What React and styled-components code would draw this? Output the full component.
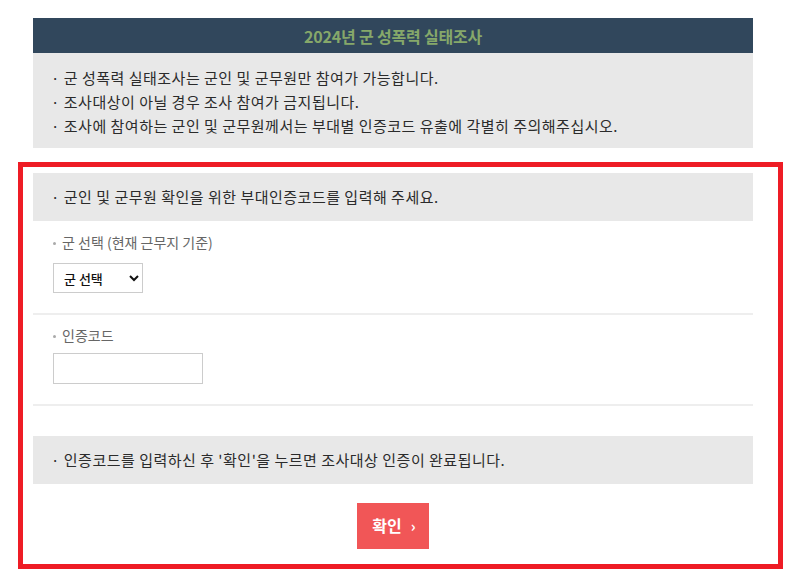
import React from "react";
import styled, { createGlobalStyle } from "styled-components";

const Global = createGlobalStyle`
  html, body { margin: 0; padding: 0; background: #fff; }
  body { font-family: "Noto Sans CJK KR", "Noto Sans", sans-serif; color: #333; }
  * { box-sizing: border-box; }
`;

const Page = styled.div`
  width: 794px;
  padding: 18px 0 0 18px;
`;

const Wrap = styled.div`
  width: 765px;
  padding-left: 15px;
`;

const Header = styled.h1`
  margin: 0;
  width: 720px;
  height: 35px;
  background: #31475c;
  color: #86a86a;
  font-size: 16px;
  font-weight: 700;
  display: flex;
  align-items: center;
  justify-content: center;
  letter-spacing: -0.2px;
`;

const Notice = styled.ul`
  margin: 0;
  width: 720px;
  list-style: none;
  background: #e8e8e8;
  padding: ${(p) => p.$pad || "13px 18px 10px"};
`;

const Item = styled.li`
  font-size: 15px;
  line-height: 24px;
  color: #2b2b2b;
  letter-spacing: 0.5px;
  white-space: nowrap;
`;

const Frame = styled.div`
  margin-top: 14px;
  width: 765px;
  border: 5px solid #ee1c25;
  padding: 6px 25px 15px 10px;
`;

const Field = styled.div`
  padding: ${(p) => p.$pad};
  border-bottom: 2px solid #eeeeee;
  display: flex;
  flex-direction: column;
  gap: ${(p) => p.$gap};
  align-items: flex-start;
`;

const Label = styled.div`
  padding-left: 20px;
  font-size: 14px;
  line-height: 20px;
  color: #666;
  display: flex;
  align-items: center;
  gap: 6px;
  &::before {
    content: "";
    width: 3px;
    height: 3px;
    border-radius: 50%;
    background: #aaa;
    margin-top: 2px;
  }
`;

const Select = styled.select`
  margin-left: 20px;
  width: 90px;
  height: 30px;
  border: 1px solid #cccccc;
  border-radius: 0;
  background: #fff;
  font-family: "Noto Sans CJK KR", sans-serif;
  font-size: 13px;
  font-weight: 500;
  color: #111;
  padding: 0 4px 0 6px;
`;

const Input = styled.input`
  margin-left: 20px;
  width: 150px;
  height: 31px;
  border: 1px solid #cccccc;
  border-radius: 0;
  padding: 0 6px;
  font-size: 13px;
`;

const Spacer = styled.div`
  height: 30px;
`;

const Actions = styled.div`
  width: 720px;
  display: flex;
  justify-content: center;
  margin-top: 19px;
`;

const Button = styled.button`
  width: 72px;
  height: 46px;
  border: 0;
  background: #f15657;
  color: #fff;
  font-family: "Noto Sans CJK KR", sans-serif;
  font-size: 16px;
  font-weight: 700;
  display: flex;
  align-items: center;
  justify-content: center;
  gap: 9px;
  padding: 0 0 2px 2px;
  cursor: pointer;
`;

const Arrow = styled.span`
  font-size: 15px;
  font-weight: 700;
  margin-top: 1px;
`;

export default function App() {
  return (
    <>
      <Global />
      <Page>
        <Wrap>
          <Header>2024년 군 성폭력 실태조사</Header>
          <Notice>
            <Item>· 군 성폭력 실태조사는 군인 및 군무원만 참여가 가능합니다.</Item>
            <Item>· 조사대상이 아닐 경우 조사 참여가 금지됩니다.</Item>
            <Item>· 조사에 참여하는 군인 및 군무원께서는 부대별 인증코드 유출에 각별히 주의해주십시오.</Item>
          </Notice>
        </Wrap>
        <Frame>
          <Notice $pad="12px 18px">
            <Item>· 군인 및 군무원 확인을 위한 부대인증코드를 입력해 주세요.</Item>
          </Notice>
          <Field $pad="11px 0 20px" $gap="11px">
            <Label>군 선택 (현재 근무지 기준)</Label>
            <Select defaultValue="">
              <option value="">군 선택</option>
              <option value="army">육군</option>
              <option value="navy">해군</option>
              <option value="air">공군</option>
            </Select>
          </Field>
          <Field $pad="10px 0 20px" $gap="8px">
            <Label>인증코드</Label>
            <Input type="text" />
          </Field>
          <Spacer />
          <Notice $pad="12px 18px">
            <Item>· 인증코드를 입력하신 후 '확인'을 누르면 조사대상 인증이 완료됩니다.</Item>
          </Notice>
          <Actions>
            <Button>
              확인<Arrow>›</Arrow>
            </Button>
          </Actions>
        </Frame>
      </Page>
    </>
  );
}
